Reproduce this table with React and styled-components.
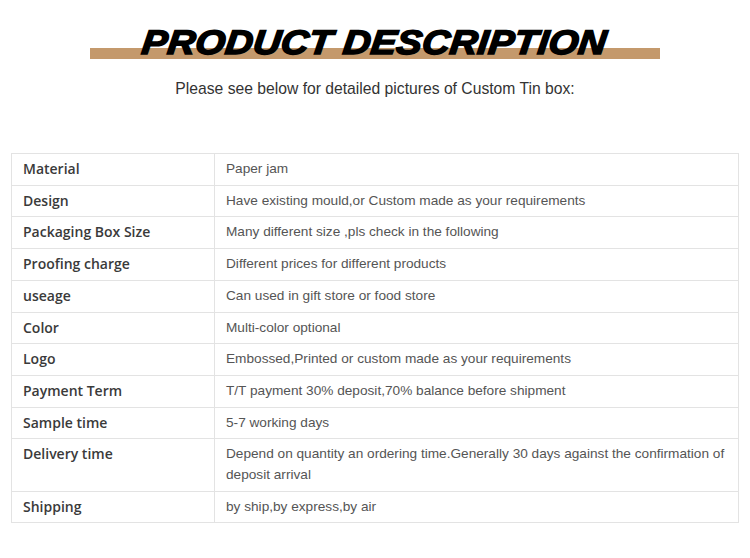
import React from "react";
import styled, { createGlobalStyle } from "styled-components";

const rows = [
    ["Material", "Paper jam"],
    ["Design", "Have existing mould,or Custom made as your requirements"],
    ["Packaging Box Size", "Many different size ,pls check in the following"],
    ["Proofing charge", "Different prices for different products"],
    ["useage", "Can used in gift store or food store"],
    ["Color", "Multi-color optional"],
    ["Logo", "Embossed,Printed or custom made as your requirements"],
    ["Payment Term", "T/T payment 30% deposit,70% balance before shipment"],
    ["Sample time", "5-7 working days"],
    ["Delivery time", "Depend on quantity an ordering time.Generally 30 days against the confirmation of deposit arrival"],
    ["Shipping", "by ship,by express,by air"],
];

const App = () => {
    return (
        <Page>
            <GlobalStyle />
            <Header>
                <TitleBand>
                    <Title>PRODUCT DESCRIPTION</Title>
                </TitleBand>
            </Header>
            <Subtitle>Please see below for detailed pictures of Custom Tin box:</Subtitle>
            <SpecTable>
                <colgroup>
                    <col style={{ width: 203 }} />
                    <col />
                </colgroup>
                <tbody>
                    {rows.map(([label, value]) => (
                        <tr key={label}>
                            <LabelCell>{label}</LabelCell>
                            <ValueCell>{value}</ValueCell>
                        </tr>
                    ))}
                </tbody>
            </SpecTable>
        </Page>
    );
};

export default App;

const GlobalStyle = createGlobalStyle`
    body {
        margin: 0;
        background: #ffffff;
        font-family: "Liberation Sans", Arial, sans-serif;
    }
`;

const Page = styled.div`
    width: 750px;
    height: 558px;
    padding-top: 20px;
    box-sizing: border-box;
    overflow: hidden;
`;

const Header = styled.div`
    display: flex;
    justify-content: center;
`;

const TitleBand = styled.div`
    width: 570px;
    display: flex;
    justify-content: center;
    background: linear-gradient(#c4996c, #c4996c) no-repeat;
    background-size: 100% 11px;
    background-position: 0 28px;
    height: 40px;
    margin-left: -1px;
`;

const Title = styled.h1`
    margin: 4px 0 0;
    font-family: "Liberation Sans", Arial, sans-serif;
    font-size: 34px;
    line-height: 36px;
    font-weight: 700;
    font-style: italic;
    color: #000;
    -webkit-text-stroke: 1.6px #000;
    letter-spacing: 0.15px;
    transform: scaleX(1.125) skewX(-6deg);
`;

const Subtitle = styled.p`
    margin: 20px 0 0;
    text-align: center;
    font-size: 15.7px;
    line-height: 18px;
    color: #333;
`;

const SpecTable = styled.table`
    margin: 55px 0 0 11px;
    width: 728px;
    border-collapse: collapse;
    table-layout: fixed;
    border: 1px solid #e3e3e3;
    font-size: 14px;
`;

const Cell = styled.td`
    border: 1px solid #e3e3e3;
    padding: 5px 8px 5px 11px;
    line-height: 20.7px;
    vertical-align: top;
    text-align: left;
`;

const LabelCell = styled(Cell)`
    font-family: "Open Sans", "Noto Sans", sans-serif;
    font-weight: 600;
    font-size: 14px;
    color: #3a3a3a;
`;

const ValueCell = styled(Cell)`
    font-family: "Liberation Sans", Arial, sans-serif;
    font-size: 13.65px;
    color: #555;
`;
